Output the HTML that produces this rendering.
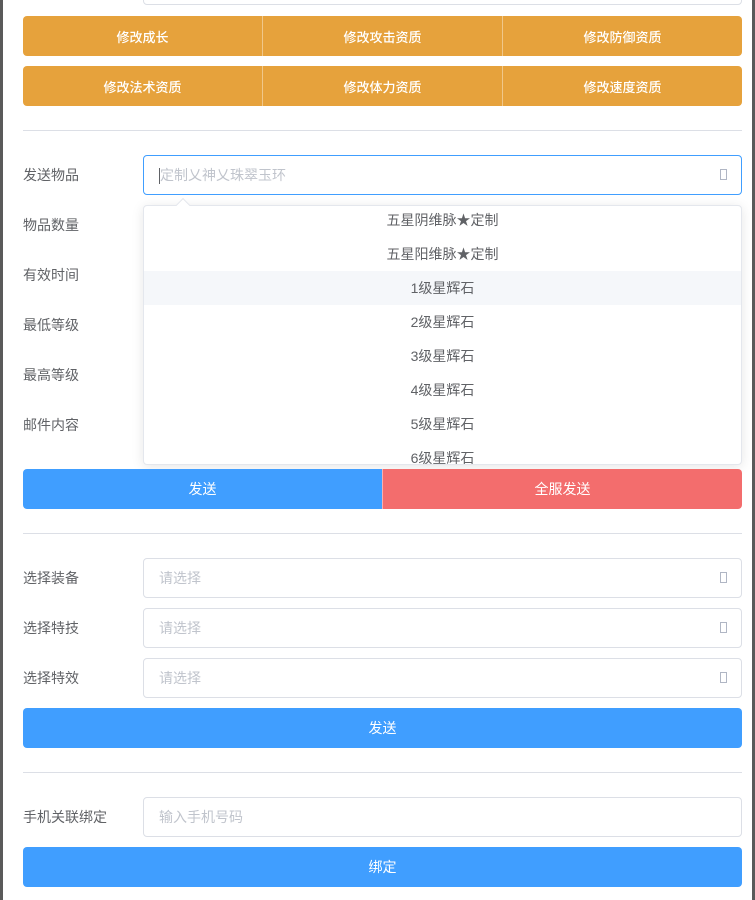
<!DOCTYPE html>
<html><head><meta charset="utf-8"><style>
*{box-sizing:border-box;margin:0;padding:0}
body{width:755px;height:900px;background:#fff;position:relative;overflow:hidden;font-family:"Liberation Sans","Noto Sans CJK SC",sans-serif;font-size:14px;color:#606266}
.a{position:absolute}
.edge{top:0;width:3px;height:900px;background:#5a5a5a}
.btn{position:absolute;height:40px;display:flex;color:#fff;border-radius:4px;overflow:hidden}
.btn div{flex:1;display:flex;align-items:center;justify-content:center}
.or div{background:#e6a23c;border-left:1px solid #f0c78a}
.or div:first-child{border-left:none}
.or{font-size:13px;font-weight:500}
.hr{left:23px;width:719px;height:1px;background:#dcdfe6}
.lab{left:23px;height:40px;line-height:40px;width:110px}
.inp{left:143px;width:599px;height:40px;border:1px solid #dcdfe6;border-radius:4px;padding-left:15px;line-height:38px;color:#c0c4cc}
.ic{position:absolute;right:14px;top:13px;width:7px;height:11px;border:1px solid #b0b6c4}
.dd{left:143px;top:205px;width:599px;height:260px;border:1px solid #e4e7ed;border-radius:4px;box-shadow:0 2px 12px rgba(0,0,0,.1);overflow:hidden;background:#fff}
.dd div{height:34px;line-height:34px;text-align:center;color:#606266}
</style></head><body>
<div class="a edge" style="left:0"></div>
<div class="a edge" style="left:752px"></div>
<div class="a" style="left:143px;top:-30px;width:599px;height:35px;border:1px solid #dcdfe6;border-radius:4px"></div>
<div class="btn or" style="left:23px;top:16px;width:719px"><div>修改成长</div><div>修改攻击资质</div><div>修改防御资质</div></div>
<div class="btn or" style="left:23px;top:66px;width:719px"><div>修改法术资质</div><div>修改体力资质</div><div>修改速度资质</div></div>
<div class="a hr" style="top:130px"></div>
<div class="a lab" style="top:155px">发送物品</div>
<div class="a lab" style="top:205px">物品数量</div>
<div class="a lab" style="top:255px">有效时间</div>
<div class="a lab" style="top:305px">最低等级</div>
<div class="a lab" style="top:355px">最高等级</div>
<div class="a lab" style="top:405px">邮件内容</div>
<div class="a inp" style="top:155px;border-color:#409eff"><span style="display:inline-block;width:1px;height:16px;background:#606266;vertical-align:middle"></span>定制乂神乂珠翠玉环<i class="ic"></i></div>
<div class="a" style="left:178px;top:200px;width:10px;height:10px;background:#fff;border-left:1px solid #e4e7ed;border-top:1px solid #e4e7ed;transform:rotate(45deg);z-index:2"></div>
<div class="a dd"><div style="margin-top:-3px">五星阴维脉★定制</div><div>五星阳维脉★定制</div><div style="background:#f5f7fa">1级星辉石</div><div>2级星辉石</div><div>3级星辉石</div><div>4级星辉石</div><div>5级星辉石</div><div>6级星辉石</div></div>
<div class="btn" style="left:23px;top:469px;width:719px"><div style="background:#409eff">发送</div><div style="background:#f36d6d;border-left:1px solid #f8b0b0">全服发送</div></div>
<div class="a hr" style="top:533px"></div>
<div class="a lab" style="top:558px">选择装备</div>
<div class="a inp" style="top:558px">请选择<i class="ic"></i></div>
<div class="a lab" style="top:608px">选择特技</div>
<div class="a inp" style="top:608px">请选择<i class="ic"></i></div>
<div class="a lab" style="top:658px">选择特效</div>
<div class="a inp" style="top:658px">请选择<i class="ic"></i></div>
<div class="btn" style="left:23px;top:708px;width:719px"><div style="background:#409eff">发送</div></div>
<div class="a hr" style="top:772px"></div>
<div class="a lab" style="top:797px">手机关联绑定</div>
<div class="a inp" style="top:797px">输入手机号码</div>
<div class="btn" style="left:23px;top:847px;width:719px"><div style="background:#409eff">绑定</div></div>
</body></html>
